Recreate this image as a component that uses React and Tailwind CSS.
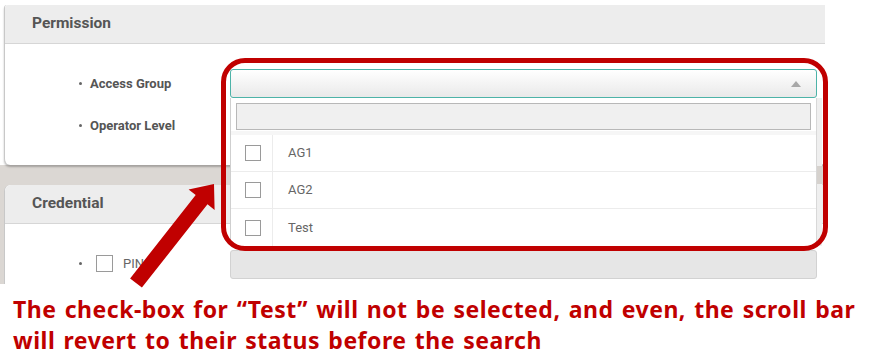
import React from "react";

const roboto = { fontFamily: "Roboto, 'Liberation Sans', sans-serif" };

function Bullet() {
  return <span className="inline-block w-[3px] h-[3px] rounded-full bg-[#666] mr-[8px]" />;
}

function Row({ label, last }) {
  return (
    <div className={`flex h-[37px] ${last ? "" : "border-b border-[#ececec]"}`}>
      <div className="w-[42px] flex items-center justify-center border-r border-[#ececec] pl-[2px]">
        <span className="w-[16px] h-[16px] border border-[#9a9a9a] bg-white" />
      </div>
      <div className="flex items-center pl-[15px] text-[13px] text-[#666]">{label}</div>
    </div>
  );
}

export default function App() {
  return (
    <div className="relative w-[869px] h-[362px] bg-white overflow-hidden" style={roboto}>
      {/* screenshot area */}
      <div className="w-[825px] h-[284px] overflow-hidden flex flex-col">
        <div className="h-[5px] bg-white" />
        {/* Permission panel */}
        <div className="ml-[4px] h-[160px] bg-white border-l border-[#c8c8c8] rounded-tl-[3px] rounded-b-[6px] shadow-[0_2px_2px_rgba(0,0,0,0.25)] flex flex-col relative z-10">
          <div className="h-[39px] bg-[#ededed] border-b border-[#d6d6d6] flex items-center pl-[27px] text-[15.5px] font-bold text-[#555] rounded-tl-[3px]">
            Permission
          </div>
          <div className="flex flex-col pl-[74px] pt-[31px] gap-[25px] text-[13px] font-bold text-[#555]">
            <div className="flex items-center h-[17px]"><Bullet />Access Group</div>
            <div className="flex items-center h-[17px]"><Bullet />Operator Level</div>
          </div>
        </div>
        {/* gap */}
        <div className="h-[20px] bg-[#dbd7d3]" />
        {/* Credential panel */}
        <div className="flex-1 bg-[#dbd7d3] pl-[4px]">
          <div className="h-full bg-white border-l border-[#c8c8c8] rounded-tl-[6px] flex flex-col">
            <div className="h-[39px] bg-[#ededed] border-b border-[#d6d6d6] flex items-center pl-[27px] text-[15.5px] font-bold text-[#555] rounded-tl-[6px]">
              Credential
            </div>
            <div className="flex items-center pl-[74px] pt-[30px] text-[13px] text-[#666]">
              <Bullet />
              <span className="w-[17px] h-[17px] border border-[#9a9a9a] bg-white ml-[6px] mr-[10px]" />
              <span>PIN</span>
            </div>
          </div>
        </div>
      </div>

      {/* PIN input bar */}
      <div className="absolute left-[230px] top-[250px] w-[587px] h-[29px] bg-[#e6e6e6] border border-[#d2d2d2] rounded-[3px]" />

      {/* Dropdown overlay */}
      <div className="absolute left-[230px] top-[69px] w-[592px] flex flex-col z-20">
        <div className="w-[587px] h-[29px] border border-[#4db3a8] rounded-[3px] bg-gradient-to-b from-white to-[#e9e9e9] flex items-center justify-end pr-[15px]">
          <svg width="10" height="6" viewBox="0 0 10 6">
            <path d="M5 0 L10 6 L0 6 Z" fill="#a8a8a8" />
          </svg>
        </div>
        <div className="relative bg-white border-l border-[#cfcfcf] pr-[6px]">
          <div className="px-[5px] pt-[5px] pb-[1px] bg-white">
            <div className="h-[27px] bg-[#f0f0f0] border border-[#b8b8b8]" />
          </div>
          <div className="h-[4px] bg-[#f6f6f6]" />
          <Row label="AG1" />
          <Row label="AG2" />
          <Row label="Test" last />
          <div className="absolute right-0 top-0 bottom-0 w-[6px] bg-[#efefef] border-l border-[#d8d8d8]">
            <div className="absolute left-0 right-0 top-[68px] h-[18px] bg-[#d6d2ce]" />
          </div>
        </div>
      </div>

      {/* red annotation rectangle */}
      <div className="absolute left-[221px] top-[58px] w-[607px] h-[193px] border-[5px] border-[#c00000] rounded-[24px] z-30 pointer-events-none" />

      {/* red arrow */}
      <svg className="absolute left-0 top-0 z-30 pointer-events-none" width="869" height="362" viewBox="0 0 869 362">
        <polygon
          points="130.1,278.4 195.7,195.1 188.6,189.5 214,184 214.6,209.9 207.5,204.3 141.9,287.6"
          fill="#c00000"
        />
      </svg>

      {/* caption */}
      <div
        className="absolute left-[13px] top-[294px] text-[#c00000] font-bold text-[23px] leading-[31px] whitespace-nowrap tracking-[0.5px] [word-spacing:1.8px]"
        style={{ fontFamily: "'Noto Sans', 'Open Sans', sans-serif" }}
      >
        <div>The check-box for “Test” will not be selected, and even, the scroll bar</div>
        <div>will revert to their status before the search</div>
      </div>
    </div>
  );
}
